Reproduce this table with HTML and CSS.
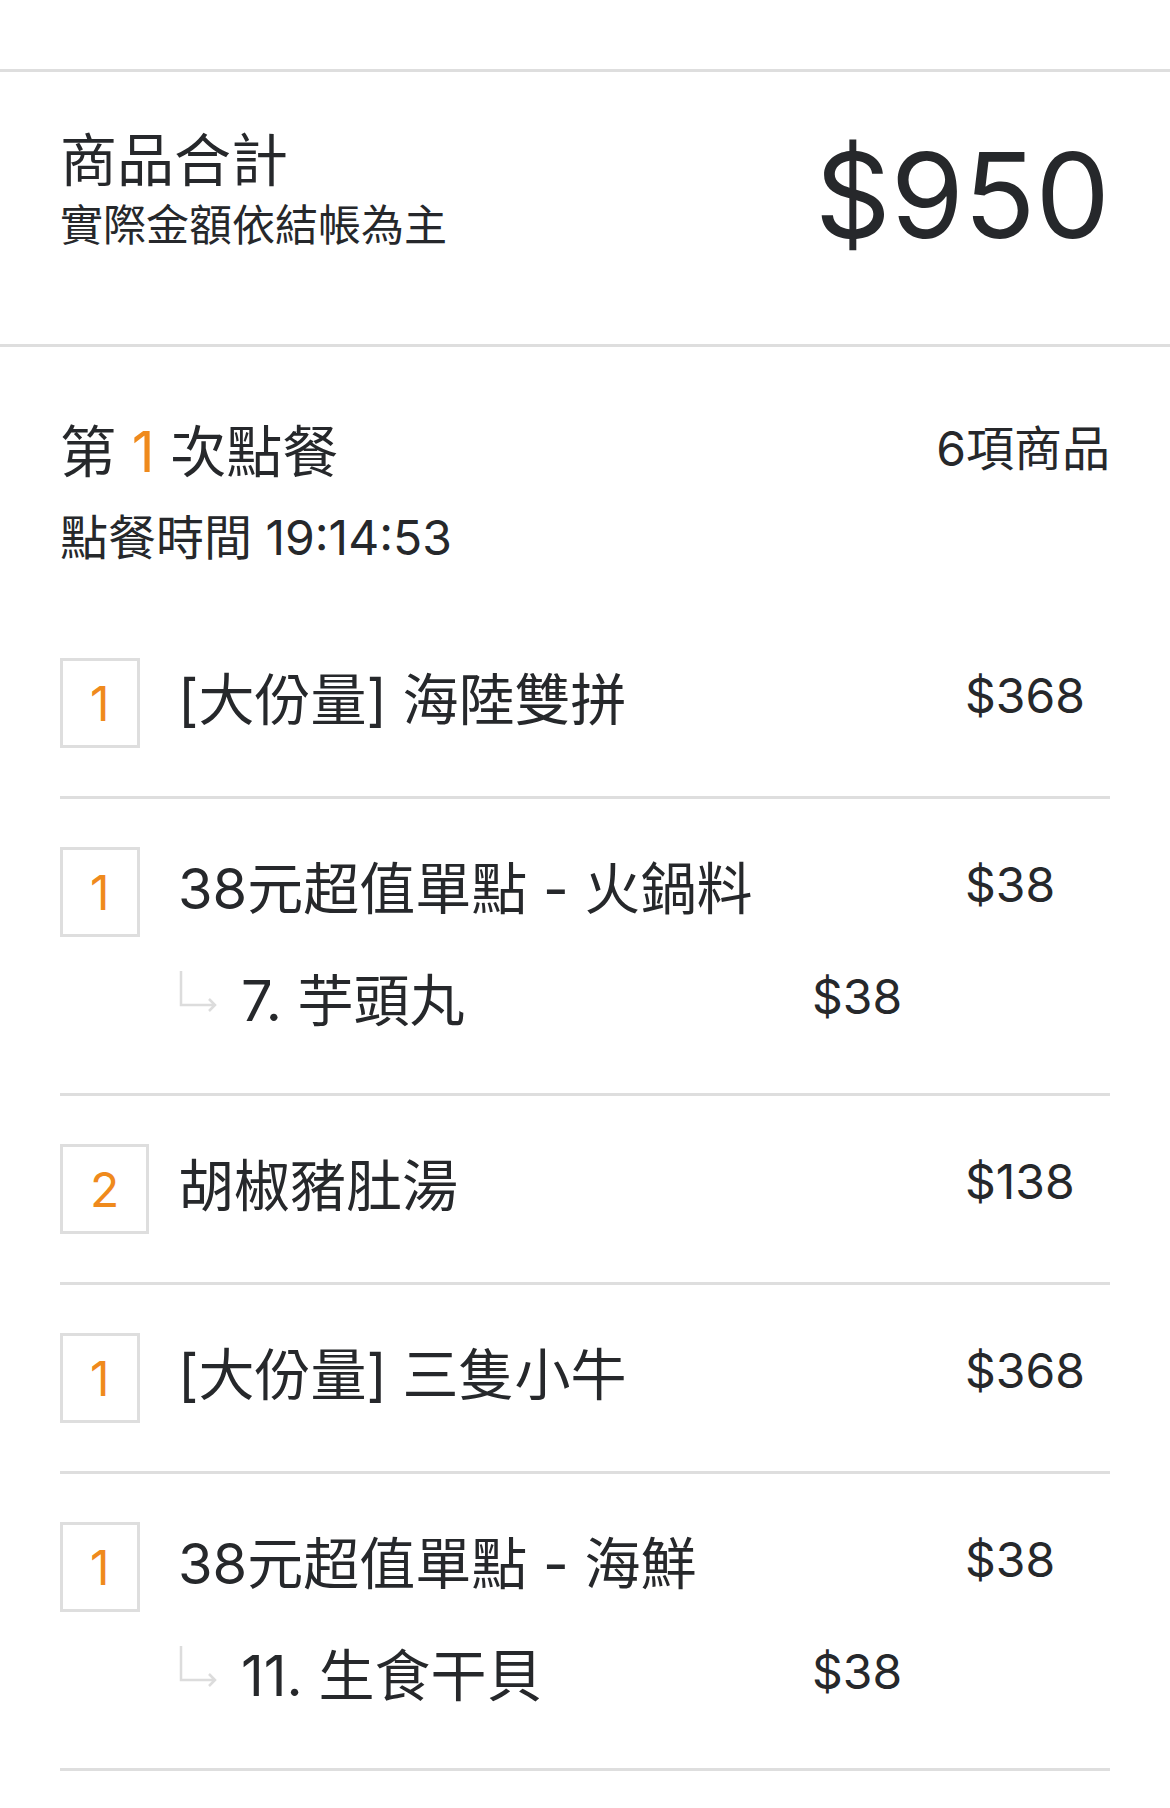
FILE: index.html
```html
<!DOCTYPE html>
<html lang="zh-Hant">
<head>
<meta charset="utf-8">
<title>訂單明細</title>
<link rel="stylesheet" href="styles.css">
</head>
<body>
<div class="page">
  <div class="topbar"></div>
  <div class="rule"></div>
  <section class="summary">
    <div class="summary-text">
      <div class="summary-title">商品合計</div>
      <div class="summary-note">實際金額依結帳為主</div>
    </div>
    <div class="summary-total">$950</div>
  </section>
  <div class="rule"></div>
  <section class="order">
    <div class="order-head">
      <div class="order-title">第 <span class="accent">1</span> 次點餐</div>
      <div class="order-count">6項商品</div>
    </div>
    <div class="order-time">點餐時間 19:14:53</div>
    <ul class="items">
      <li class="item">
        <div class="qty-col"><span class="qty">1</span></div>
        <div class="body">
          <div class="main"><span class="name">[大份量] 海陸雙拼</span><span class="price">$368</span></div>
        </div>
      </li>
      <li class="item">
        <div class="qty-col"><span class="qty">1</span></div>
        <div class="body">
          <div class="main"><span class="name">38元超值單點 - 火鍋料</span><span class="price">$38</span></div>
          <div class="sub">
            <svg class="sub-icon" viewBox="0 0 40 44" width="40" height="44"><path d="M3 0 V34 H37 M31 28 L37 34 L31 40" fill="none" stroke="#dcdcdc" stroke-width="2.5"/></svg>
            <span class="sub-name">7. 芋頭丸</span><span class="sub-price">$38</span>
          </div>
        </div>
      </li>
      <li class="item">
        <div class="qty-col"><span class="qty">2</span></div>
        <div class="body">
          <div class="main"><span class="name">胡椒豬肚湯</span><span class="price">$138</span></div>
        </div>
      </li>
      <li class="item">
        <div class="qty-col"><span class="qty">1</span></div>
        <div class="body">
          <div class="main"><span class="name">[大份量] 三隻小牛</span><span class="price">$368</span></div>
        </div>
      </li>
      <li class="item">
        <div class="qty-col"><span class="qty">1</span></div>
        <div class="body">
          <div class="main"><span class="name">38元超值單點 - 海鮮</span><span class="price">$38</span></div>
          <div class="sub">
            <svg class="sub-icon" viewBox="0 0 40 44" width="40" height="44"><path d="M3 0 V34 H37 M31 28 L37 34 L31 40" fill="none" stroke="#dcdcdc" stroke-width="2.5"/></svg>
            <span class="sub-name">11. 生食干貝</span><span class="sub-price">$38</span>
          </div>
        </div>
      </li>
    </ul>
  </section>
</div>
</body>
</html>
```
FILE: styles.css
```css
* { box-sizing: border-box; }
body {
  margin: 0;
  background: #fff;
  color: #26282b;
  font-family: Inter, "Noto Sans CJK TC", sans-serif;
  font-weight: 400;
}
.topbar { height: 69px; }
.rule { height: 3px; background: #dedede; }

.summary {
  display: flex;
  justify-content: space-between;
  align-items: center;
  padding: 58px 60px 94px;
}
.summary-title { font-size: 57px; line-height: 62px; }
.summary-note { font-size: 43px; line-height: 50px; margin-top: 8px; }
.summary-total { font-size: 118px; line-height: 110px; margin-top: 10px; }

.order { padding: 70px 60px 0; }
.order-head {
  display: flex;
  justify-content: space-between;
  align-items: center;
}
.order-title { font-size: 56px; line-height: 64px; }
.accent { color: #ef8a1c; }
.order-count { font-size: 48px; line-height: 64px; margin-bottom: 6px; }
.order-time { font-size: 48px; line-height: 56px; margin-top: 23px; }

.items { list-style: none; margin: 44px 0 0; padding: 0; }
.item {
  display: flex;
  padding: 48px 0;
  border-bottom: 3px solid #dedede;
}
.qty-col { width: 118px; flex: none; }
.qty {
  display: inline-flex;
  align-items: center;
  justify-content: center;
  height: 90px;
  padding: 0 27px;
  border: 3px solid #dedede;
  color: #ef8a1c;
  font-size: 48px;
}
.body { flex: 1; }
.main { display: flex; align-items: center; height: 90px; padding-bottom: 16px; }
.name { flex: 1; font-size: 56px; }
.price { width: 145px; font-size: 48px; }
.sub { display: flex; align-items: center; height: 88px; margin-top: 20px; padding-bottom: 10px; }
.sub-icon { flex: none; margin: 0 23px 6px 0; }
.sub-name { flex: 1; font-size: 56px; }
.sub-price { width: 153px; margin-right: 145px; font-size: 48px; }
```
